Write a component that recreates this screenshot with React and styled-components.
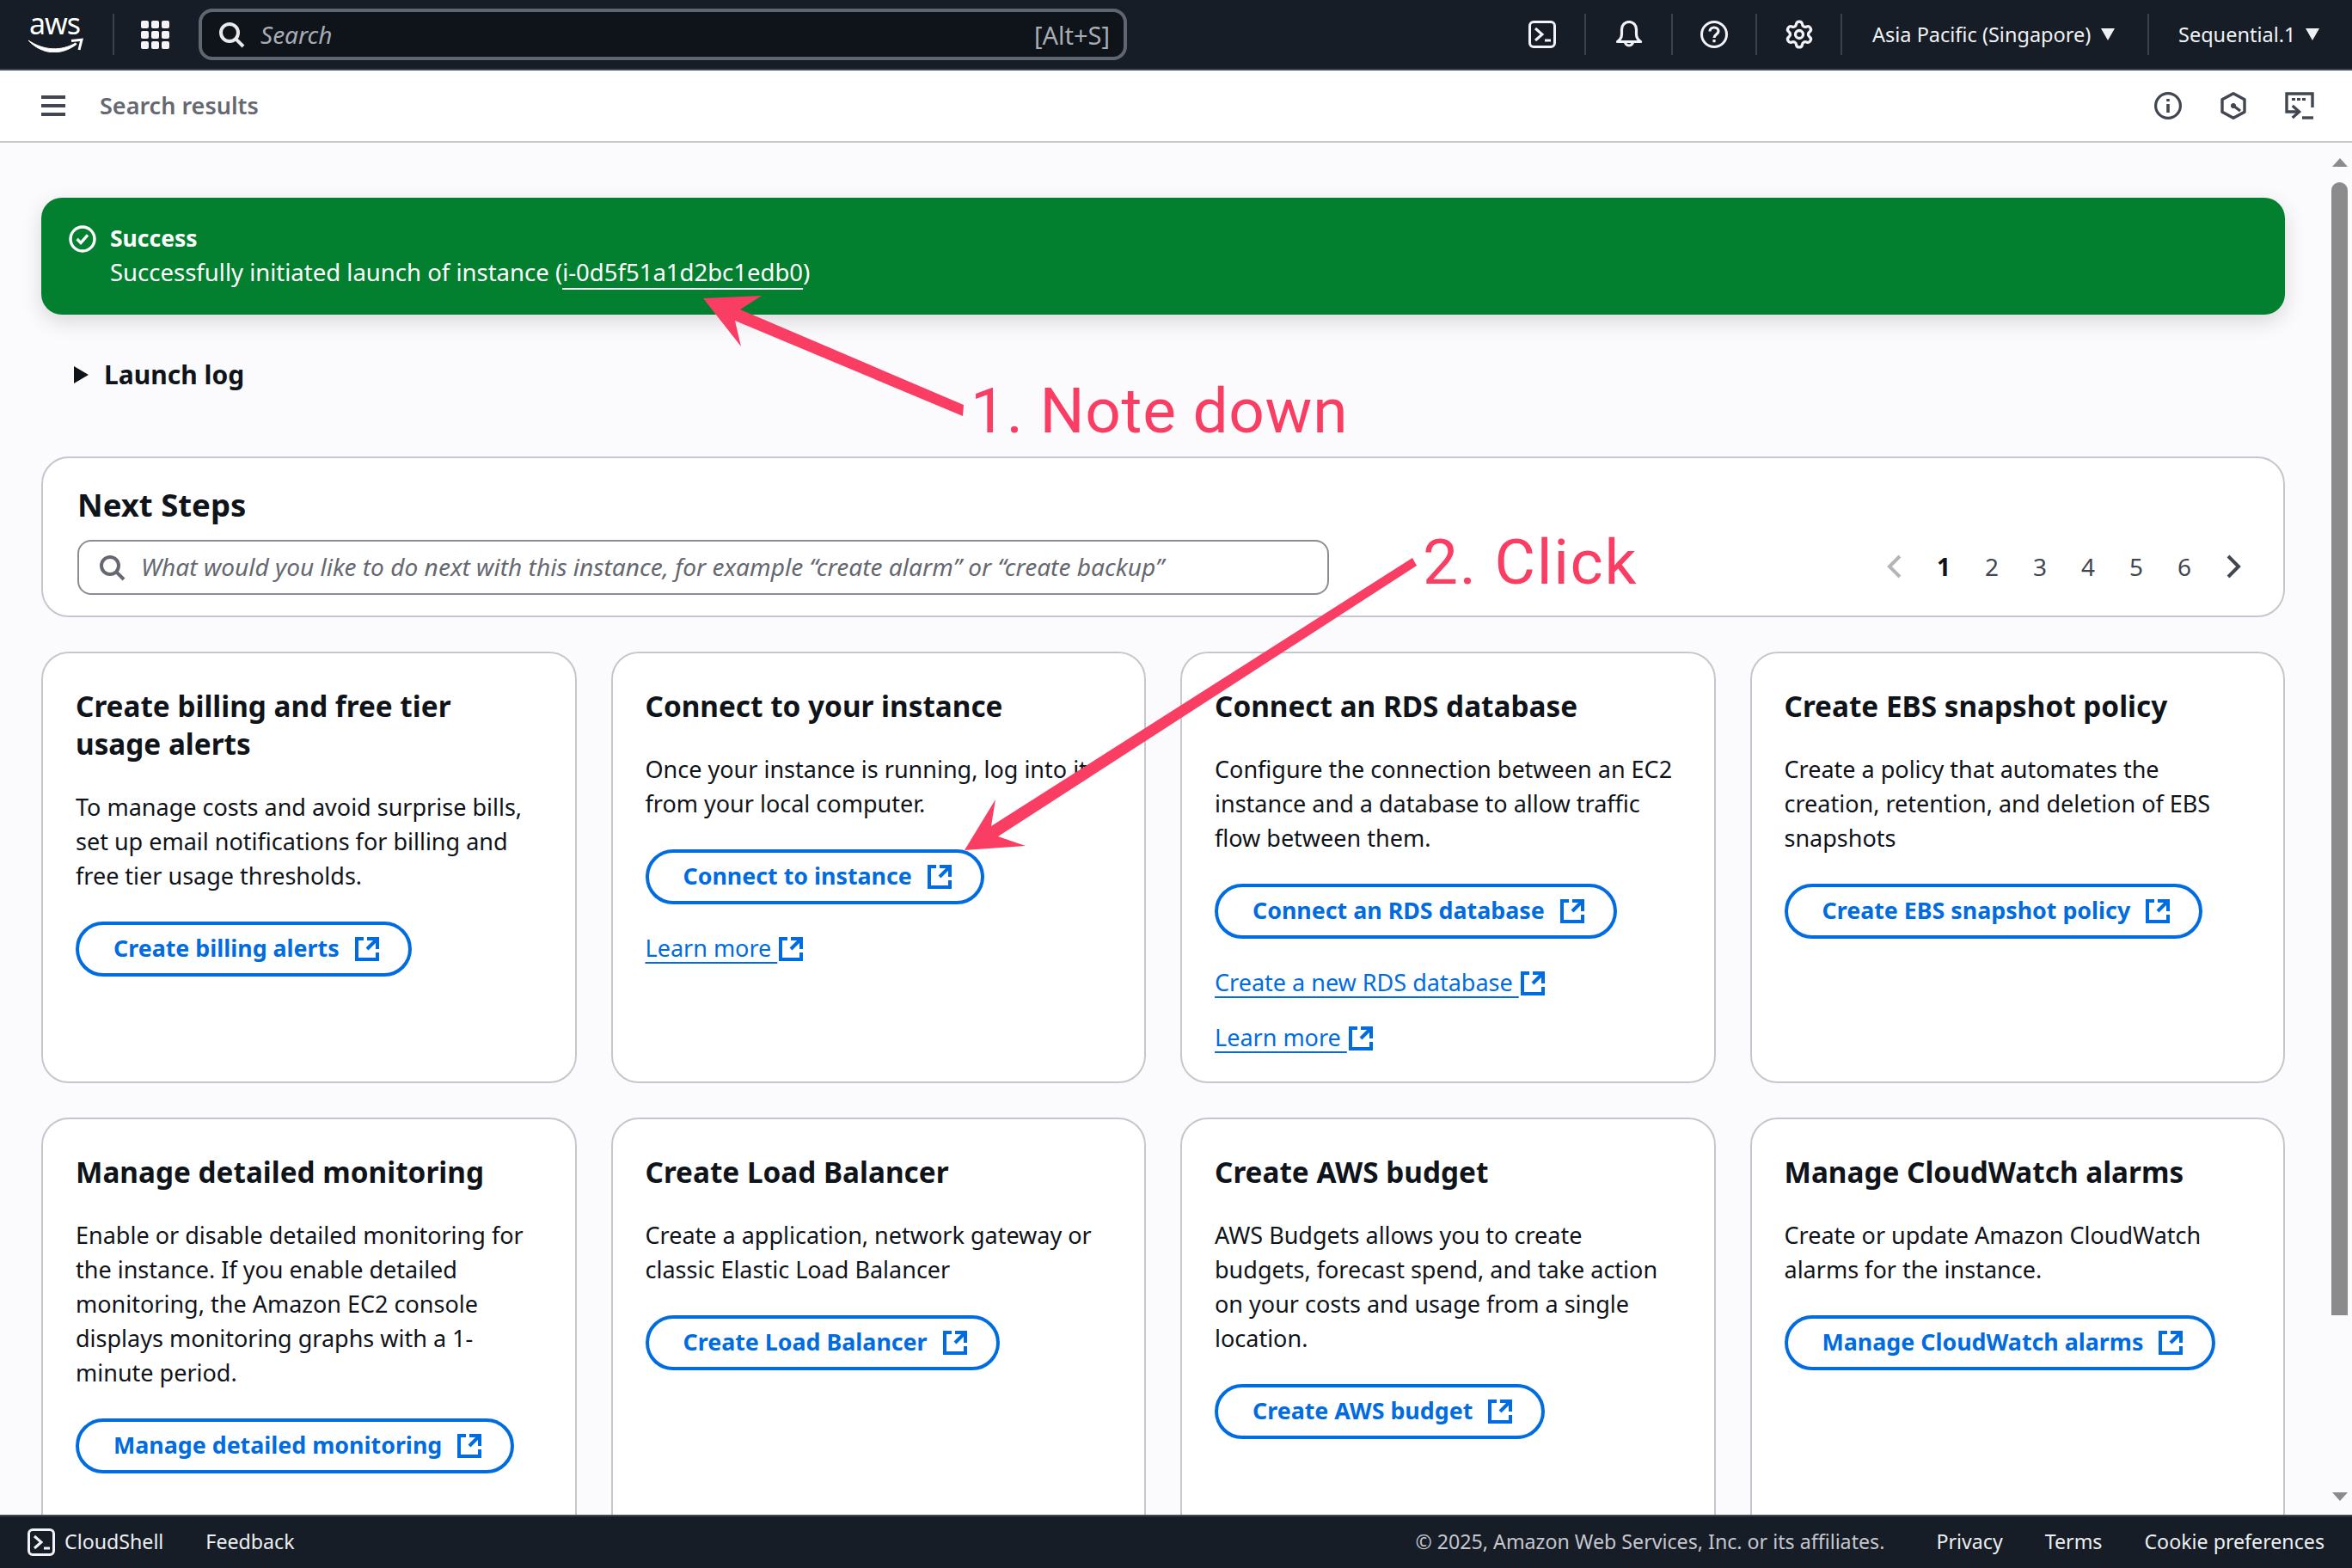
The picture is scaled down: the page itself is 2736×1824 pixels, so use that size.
import React from 'react';
import styled, { createGlobalStyle } from 'styled-components';
import { Settings } from 'lucide-react';

const FONT = '"Noto Sans", "Open Sans", sans-serif';

const GlobalStyle = createGlobalStyle`
    html, body { margin: 0; padding: 0; height: 100%; overflow: hidden; }
    body { font-family: ${FONT}; color: #0f141a; background: #fbfbfd; }
    * { box-sizing: border-box; }
`;

const Page = styled.div`
    position: relative;
    width: 2736px;
    height: 1824px;
    display: flex;
    flex-direction: column;
    overflow: hidden;
`;

/* top navigation */
const TopBar = styled.header`
    flex: none;
    height: 82px;
    display: flex;
    align-items: center;
    background: #161d26;
    border-bottom: 2px solid #414750;
    color: #e8e9ec;
`;

const Logo = styled.div`
    width: 66px;
    margin-left: 33px;
    padding-bottom: 6px;
    flex: none;
    display: flex;
    flex-direction: column;
`;

const LogoWord = styled.span`
    padding-left: 1px;
    font-size: 34px;
    line-height: 28px;
    letter-spacing: -1px;
    color: #fff;
`;

const VLine = styled.div`
    width: 2px;
    height: 48px;
    background: #3a424e;
    margin-left: 32px;
`;

const AppGrid = styled.div`
    margin-left: 31px;
    width: 33px;
    height: 32px;
    display: grid;
    grid-template-columns: repeat(3, 9px);
    grid-template-rows: repeat(3, 9px);
    gap: 3px;
`;

const AppDot = styled.span`
    background: #f3f3f7;
    border-radius: 2px;
`;

const SearchBox = styled.div`
    margin-left: 34px;
    width: 1080px;
    height: 60px;
    border: 4px solid #5f6670;
    border-radius: 16px;
    background: #0f141a;
    display: flex;
    align-items: center;
    padding: 0 16px 0 18px;
`;

const SearchHint = styled.span`
    margin-left: 18px;
    font-size: 28px;
    font-style: italic;
    color: #a8acb4;
`;

const SearchKey = styled.span`
    margin-left: auto;
    font-size: 29px;
    color: #a8acb4;
`;

const NavRight = styled.div`
    margin-left: auto;
    display: flex;
    align-items: center;
`;

const NavIcon = styled.div`
    width: ${p => p.$w}px;
    height: 48px;
    display: flex;
    align-items: center;
    justify-content: center;
    border-left: ${p => (p.$first ? 'none' : '2px solid #3a424e')};
`;

const NavMenu = styled.div`
    width: ${p => p.$w}px;
    height: 48px;
    display: flex;
    align-items: center;
    gap: 12px;
    padding-left: ${p => p.$pad}px;
    border-left: 2px solid #3a424e;
    font-size: 23.5px;
    color: #f0f1f3;
    white-space: nowrap;
`;

const Caret = styled.span`
    width: 0;
    height: 0;
    border-left: 8px solid transparent;
    border-right: 8px solid transparent;
    border-top: 14px solid #f0f1f3;
`;

/* breadcrumb strip */
const SubBar = styled.div`
    flex: none;
    height: 84px;
    display: flex;
    align-items: center;
    padding: 0 44px 0 48px;
    background: #fff;
    border-bottom: 2px solid #c6c6cd;
`;

const Burger = styled.div`
    width: 28px;
    height: 24px;
    display: flex;
    flex-direction: column;
    justify-content: space-between;
    span { height: 4px; background: #424650; }
`;

const Crumb = styled.div`
    margin-left: 40px;
    padding-bottom: 2px;
    font-size: 27px;
    font-weight: 600;
    color: #656871;
`;

const SubIcons = styled.div`
    margin-left: auto;
    display: flex;
    align-items: center;
    gap: 44px;
    color: #424650;
`;

/* main scrolling area */
const Main = styled.main`
    flex: 1;
    min-height: 0;
    display: flex;
    overflow: hidden;
`;

const Content = styled.div`
    width: 2706px;
    flex: none;
    padding: 64px 48px 0;
`;

const Banner = styled.div`
    height: 136px;
    padding: 27px 32px;
    background: #037f30;
    border-radius: 24px;
    box-shadow: 0 8px 24px rgba(0, 7, 22, 0.14);
    color: #fff;
    display: flex;
    gap: 16px;
    font-size: 27.5px;
    line-height: 40px;
`;

const BannerTitle = styled.div`
    font-size: 26.5px;
    font-weight: 700;
    line-height: 40px;
`;

const BannerLink = styled.span`
    text-decoration: underline;
    text-decoration-thickness: 2px;
    text-underline-offset: 8px;
`;

const Expander = styled.div`
    margin-top: 51px;
    height: 40px;
    padding: 0 0 3px 38px;
    display: flex;
    align-items: center;
    gap: 18px;
    font-size: 30px;
    font-weight: 700;
    color: #0f141a;
`;

const ExpandArrow = styled.span`
    width: 0;
    height: 0;
    border-top: 10px solid transparent;
    border-bottom: 10px solid transparent;
    border-left: 17px solid #0f141a;
`;

const NextSteps = styled.section`
    margin-top: 74px;
    height: 187px;
    padding: 30px 31px 0 40px;
    background: #fff;
    border: 2px solid #c6c6cd;
    border-radius: 32px;
`;

const NextTitle = styled.h2`
    margin: 0 0 17px;
    font-size: 36.5px;
    line-height: 48px;
    font-weight: 700;
    color: #0f141a;
`;

const NextRow = styled.div`
    display: flex;
    align-items: center;
`;

const NextInput = styled.div`
    width: 1456px;
    height: 64px;
    display: flex;
    align-items: center;
    gap: 18px;
    padding: 0 24px 0 22px;
    border: 2px solid #8c8c94;
    border-radius: 16px;
    color: #656871;
`;

const NextHint = styled.span`
    padding-bottom: 2px;
    font-size: 28.1px;
    font-style: italic;
    color: #656871;
`;

const Pager = styled.div`
    margin-left: auto;
    display: flex;
    align-items: center;
`;

const PageCell = styled.span`
    width: 56px;
    padding-bottom: 2px;
    display: flex;
    justify-content: center;
    font-size: 28px;
    font-weight: ${p => (p.$active ? 700 : 400)};
    color: ${p => (p.$active ? '#0f141a' : '#424650')};
`;

const Cards = styled.div`
    margin-top: 40px;
    display: grid;
    grid-template-columns: repeat(4, 1fr);
    grid-auto-rows: 502px;
    gap: 40px;
`;

const Card = styled.article`
    padding: 39px 38px;
    background: #fff;
    border: 2px solid #c6c6cd;
    border-radius: 32px;
`;

const CardTitle = styled.h3`
    margin: 0;
    font-size: 33.3px;
    line-height: 44px;
    font-weight: 700;
    white-space: pre-line;
`;

const CardText = styled.p`
    margin: 32px 0 33px;
    font-size: 27px;
    line-height: 40px;
    white-space: pre-line;
`;

const Button = styled.div`
    display: inline-flex;
    align-items: center;
    gap: 16px;
    height: 64px;
    padding: 0 32px 0 40px;
    border: 4px solid #006ce0;
    border-radius: 40px;
    color: #006ce0;
    font-size: 26.8px;
    font-weight: 700;
    white-space: nowrap;
`;

const ButtonLabel = styled.span`
    padding-bottom: 3px;
`;

const LinkList = styled.div`
    margin-top: 32px;
    display: flex;
    flex-direction: column;
    gap: 24px;
`;

const LearnLink = styled.div`
    display: flex;
    align-items: center;
    height: 40px;
    color: #006ce0;
    font-size: 27px;
    span {
        padding-bottom: 3px;
        white-space: pre;
        text-decoration: underline;
        text-decoration-thickness: 2px;
        text-underline-offset: 6px;
    }
`;

/* scrollbar */
const ScrollTrack = styled.div`
    flex: 1;
    display: flex;
    flex-direction: column;
    align-items: center;
    padding: 18px 0 16px 1px;
`;

const ScrollArrow = styled.span`
    width: 0;
    height: 0;
    border-left: 9px solid transparent;
    border-right: 9px solid transparent;
    ${p => (p.$down ? 'border-top: 10px solid #8b8b8b;' : 'border-bottom: 10px solid #8b8b8b;')}
`;

const ScrollThumb = styled.div`
    width: 19px;
    height: 1318px;
    margin-top: 18px;
    background: #8b8b8b;
    border-radius: 10px 10px 0 0;
`;

const ScrollGap = styled.div`
    flex: 1;
`;

/* footer */
const Footer = styled.footer`
    flex: none;
    height: 62px;
    display: flex;
    align-items: center;
    padding: 0 32px;
    background: #161d26;
    border-top: 2px solid #414750;
    color: #e8e9ec;
    font-size: 23.2px;
`;

const FooterItem = styled.span`
    margin-left: ${p => p.$ml || 0}px;
    padding-bottom: 2px;
    white-space: nowrap;
    color: ${p => (p.$muted ? '#c6c6cd' : '#eceef1')};
`;

const FooterSpacer = styled.div`
    flex: 1;
`;

/* tutorial annotation painted on top of the screenshot */
const Overlay = styled.svg`
    position: absolute;
    left: 0;
    top: 0;
    pointer-events: none;
`;

const Note = styled.div`
    position: absolute;
    left: ${p => p.$x}px;
    top: ${p => p.$y}px;
    font-family: Roboto, sans-serif;
    font-size: 73px;
    line-height: 84px;
    letter-spacing: ${p => p.$ls}px;
    color: #fa3e63;
    white-space: nowrap;
`;

const Ext = () => (
    <svg width="32" height="32" viewBox="0 0 16 16" fill="none" stroke="currentColor" strokeWidth="2" style={{ flex: 'none' }}>
        <path d="M14 8V2H8" />
        <path d="M14 2 8 8" />
        <path d="M6 2H2v12h12v-4" />
    </svg>
);

const MagIcon = ({ color }) => (
    <svg width="32" height="32" viewBox="0 0 16 16" fill="none" stroke={color} strokeWidth="2" style={{ flex: 'none' }}>
        <circle cx="7" cy="7" r="5" />
        <path d="m10.7 10.7 4.3 4.3" />
    </svg>
);

const ShellIcon = () => (
    <svg width="32" height="32" viewBox="0 0 32 32" fill="none" stroke="#f3f3f7" strokeWidth="3" style={{ flex: 'none' }}>
        <rect x="1.500" y="1.500" width="29" height="29" rx="4.500" />
        <path d="m8 9 8 7-8 7" />
        <path d="M19 23h7" />
    </svg>
);

const BellIcon = () => (
    <svg width="32" height="32" viewBox="0 0 32 32" fill="none" stroke="#f3f3f7" strokeWidth="3.200" strokeLinejoin="round">
        <path d="M2.500 24.500c3-2 5-4.500 5-9V10a8.500 8.500 0 0 1 17 0v5.500c0 4.500 2 7 5 9z" />
        <path d="M11.500 24.500a4.500 4.500 0 0 0 9 0" />
    </svg>
);

const HelpIcon = () => (
    <svg width="32" height="32" viewBox="0 0 32 32" fill="none" stroke="#f3f3f7" strokeWidth="3">
        <circle cx="16" cy="16" r="14.500" />
        <path d="M11 12.500c0-2.800 2.200-4.500 5-4.500s5 1.700 5 4.300c0 3.700-5 3.700-5 7.700" strokeWidth="3.200" />
        <path d="M16 22v3.200" strokeWidth="3.200" />
    </svg>
);

const InfoIcon = () => (
    <svg width="32" height="32" viewBox="0 0 32 32" fill="none" stroke="currentColor" strokeWidth="3.200">
        <circle cx="16" cy="16" r="14.400" />
        <path d="M16 14v10" strokeWidth="3.600" />
        <path d="M16 8v3" strokeWidth="3.600" />
    </svg>
);

const HexIcon = () => (
    <svg width="32" height="32" viewBox="0 0 32 32" fill="none" stroke="currentColor" strokeWidth="3.400" strokeLinejoin="round">
        <path d="M16 1.800 29 8.800v14.400l-13 7-13-7V8.800z" />
        <circle cx="16" cy="16" r="2.600" fill="currentColor" strokeWidth="1" />
        <path d="m16 16 8 6" />
    </svg>
);

const RemoteIcon = () => (
    <svg width="34" height="32" viewBox="0 0 34 32" fill="none" stroke="currentColor" strokeWidth="3.400">
        <path d="M32 18V2H2v21h15" />
        <path d="M8 8.500h4M14 8.500h4M20 8.500h4" strokeWidth="3" />
        <path d="m8.700 16 8 7-8 7" strokeWidth="3.200" />
        <path d="M20 30h13" />
    </svg>
);

const CARDS = [
    { title: 'Create billing and free tier\nusage alerts', text: 'To manage costs and avoid surprise bills,\nset up email notifications for billing and\nfree tier usage thresholds.', action: 'Create billing alerts' },
    { title: 'Connect to your instance', text: 'Once your instance is running, log into it\nfrom your local computer.', action: 'Connect to instance', links: ['Learn more'] },
    { title: 'Connect an RDS database', text: 'Configure the connection between an EC2\ninstance and a database to allow traffic\nflow between them.', action: 'Connect an RDS database', links: ['Create a new RDS database', 'Learn more'] },
    { title: 'Create EBS snapshot policy', text: 'Create a policy that automates the\ncreation, retention, and deletion of EBS\nsnapshots', action: 'Create EBS snapshot policy' },
    { title: 'Manage detailed monitoring', text: 'Enable or disable detailed monitoring for\nthe instance. If you enable detailed\nmonitoring, the Amazon EC2 console\ndisplays monitoring graphs with a 1-\nminute period.', action: 'Manage detailed monitoring' },
    { title: 'Create Load Balancer', text: 'Create a application, network gateway or\nclassic Elastic Load Balancer', action: 'Create Load Balancer' },
    { title: 'Create AWS budget', text: 'AWS Budgets allows you to create\nbudgets, forecast spend, and take action\non your costs and usage from a single\nlocation.', action: 'Create AWS budget' },
    { title: 'Manage CloudWatch alarms', text: 'Create or update Amazon CloudWatch\nalarms for the instance.', action: 'Manage CloudWatch alarms' },
];

const StepCard = ({ card }) => (
    <Card>
        <CardTitle>{card.title}</CardTitle>
        <CardText>{card.text}</CardText>
        <Button><ButtonLabel>{card.action}</ButtonLabel><Ext /></Button>
        {card.links && (
            <LinkList>
                {card.links.map(link => (
                    <LearnLink key={link}><span>{link + ' '}</span><Ext /></LearnLink>
                ))}
            </LinkList>
        )}
    </Card>
);

const App = () => (
    <Page>
        <GlobalStyle />
        <TopBar>
            <Logo>
                <LogoWord>aws</LogoWord>
                <svg width="66" height="20" viewBox="0 0 66 20">
                    <path d="M0 6C18 18 38 19 55 9L56 10.500C38 24 16 23 0 6z" fill="#fff" stroke="#fff" />
                    <path d="M50 6.500l12-1.300-3 11.800" fill="none" stroke="#fff" strokeWidth="3" />
                </svg>
            </Logo>
            <VLine />
            <AppGrid>{Array.from({ length: 9 }, (_, i) => <AppDot key={i} />)}</AppGrid>
            <SearchBox>
                <MagIcon color="#e8e9ec" />
                <SearchHint>Search</SearchHint>
                <SearchKey>[Alt+S]</SearchKey>
            </SearchBox>
            <NavRight>
                <NavIcon $w={98} $first><ShellIcon /></NavIcon>
                <NavIcon $w={101}><BellIcon /></NavIcon>
                <NavIcon $w={98}><HelpIcon /></NavIcon>
                <NavIcon $w={99}><Settings size={36} color="#f3f3f7" strokeWidth={2.2} /></NavIcon>
                <NavMenu $w={357} $pad={35}>Asia Pacific (Singapore)<Caret /></NavMenu>
                <NavMenu $w={238} $pad={34}>Sequential.1<Caret /></NavMenu>
            </NavRight>
        </TopBar>
        <SubBar>
            <Burger><span /><span /><span /></Burger>
            <Crumb>Search results</Crumb>
            <SubIcons><InfoIcon /><HexIcon /><RemoteIcon /></SubIcons>
        </SubBar>
        <Main>
            <Content>
                <Banner>
                    <svg width="32" height="32" viewBox="0 0 16 16" fill="none" stroke="#fff" strokeWidth="1.700" style={{ flex: 'none', marginTop: 5 }}>
                        <circle cx="8" cy="8" r="7" />
                        <path d="m4.800 8 2.200 2.300 4-4.600" />
                    </svg>
                    <div>
                        <BannerTitle>Success</BannerTitle>
                        <div>Successfully initiated launch of instance (<BannerLink>i-0d5f51a1d2bc1edb0</BannerLink>)</div>
                    </div>
                </Banner>
                <Expander><ExpandArrow />Launch log</Expander>
                <NextSteps>
                    <NextTitle>Next Steps</NextTitle>
                    <NextRow>
                        <NextInput>
                            <MagIcon color="#656871" />
                            <NextHint>What would you like to do next with this instance, for example “create alarm” or “create backup”</NextHint>
                        </NextInput>
                        <Pager>
                            <PageCell>
                                <svg width="32" height="32" viewBox="0 0 16 16" fill="none" stroke="#b4b4bb" strokeWidth="2"><path d="m10.500 2-6 6 6 6" /></svg>
                            </PageCell>
                            {[1, 2, 3, 4, 5, 6].map(n => <PageCell key={n} $active={n === 1}>{n}</PageCell>)}
                            <PageCell>
                                <svg width="32" height="32" viewBox="0 0 16 16" fill="none" stroke="#424650" strokeWidth="2"><path d="m5.500 2 6 6-6 6" /></svg>
                            </PageCell>
                        </Pager>
                    </NextRow>
                </NextSteps>
                <Cards>
                    {CARDS.map(card => <StepCard key={card.title} card={card} />)}
                </Cards>
            </Content>
            <ScrollTrack>
                <ScrollArrow />
                <ScrollThumb />
                <ScrollGap />
                <ScrollArrow $down />
            </ScrollTrack>
        </Main>
        <Footer>
            <ShellIcon />
            <FooterItem $ml={11}>CloudShell</FooterItem>
            <FooterItem $ml={49}>Feedback</FooterItem>
            <FooterSpacer />
            <FooterItem $muted>© 2025, Amazon Web Services, Inc. or its affiliates.</FooterItem>
            <FooterItem $ml={60}>Privacy</FooterItem>
            <FooterItem $ml={49}>Terms</FooterItem>
            <FooterItem $ml={49}>Cookie preferences</FooterItem>
        </Footer>
        <Overlay width="2736" height="1824" viewBox="0 0 2736 1824">
            <polygon fill="#fa3e63" points="818,347 886,344 861,360 1121,471 1120,484 855,373 862,403" />
            <polygon fill="#fa3e63" points="1122,989 1158,930 1153,961 1643,649 1648,658 1161,973 1193,984" />
        </Overlay>
        <Note $x={1129} $y={436} $ls={0.7}>1. Note down</Note>
        <Note $x={1655} $y={612} $ls={1.7}>2. Click</Note>
    </Page>
);

export default App;
